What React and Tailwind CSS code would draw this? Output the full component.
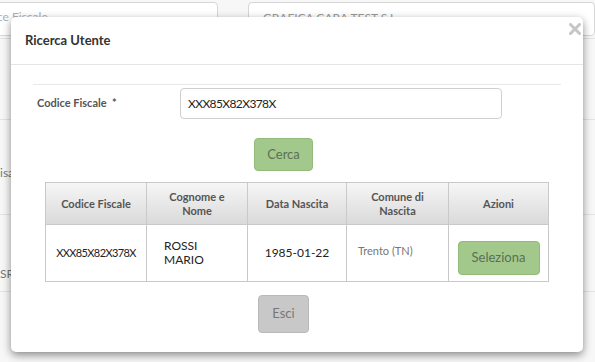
import { useState } from "react";

const rows = [
  { cf: "XXX85X82X378X", nome: "ROSSI\nMARIO", data: "1985-01-22", comune: "Trento (TN)" },
];

export default function App() {
  const [codice, setCodice] = useState("XXX85X82X378X");

  return (
    <div
      className="relative w-[595px] h-[362px] overflow-hidden bg-[#f7f7f7] text-[#333]"
      style={{ fontFamily: "Lato, 'Open Sans', sans-serif" }}
    >
      {/* page behind the modal */}
      <div className="flex gap-[30px] mt-[2px]">
        <div className="w-[228px] -ml-[10px] h-[34px] border border-[#d6d6d6] rounded-[4px] bg-white pt-[7px] pl-[6px] text-[12px] leading-[14px] text-[#a9b0c0]">
          ce Fiscale
        </div>
        <div className="flex-1 h-[34px] border border-[#d6d6d6] rounded-[4px] bg-white pt-[8px] pl-[14px] text-[12px] leading-[14px] text-[#999]">
          GRAFICA CARA TEST S.I.
        </div>
      </div>
      <div className="border-b border-[#e3e3e3] mt-[2px] h-0" />
      <div className="mt-[80px] border-b border-[#e3e3e3]" />
      <div className="mt-[44px] text-[12px] text-[#777]">isa</div>
      <div className="mt-[32px] border-b border-[#e3e3e3]" />
      <div className="mt-[50px] text-[12px] text-[#777]">SR</div>
      <div className="mt-[8px] border-b border-[#e3e3e3]" />

      {/* modal */}
      <div className="absolute left-[11px] top-[17px] w-[572px] h-[335px] bg-white rounded-[5px] shadow-[0_3px_9px_rgba(0,0,0,0.45)] flex flex-col">
        <div className="h-[48px] border-b border-[#e5e5e5] flex items-center px-[14px] relative">
          <span className="text-[13px] font-bold text-[#333]">Ricerca Utente</span>
          <svg className="absolute left-[558px] top-[6px]" width="12" height="12" viewBox="0 0 12 12">
            <path d="M1.5 1.5 L10.5 10.5 M10.5 1.5 L1.5 10.5" stroke="#c6c6c6" strokeWidth="3" strokeLinecap="round" />
          </svg>
        </div>

        <div className="px-[22px] pt-[19px] flex flex-col">
          <div className="border-t border-[#e8e8e8]" />
          <div className="flex items-center mt-[3px] h-[31px]">
            <label className="w-[147px] pl-[4px] text-[11px] font-bold text-[#555]">
              Codice Fiscale&nbsp;&nbsp;*
            </label>
            <input
              value={codice}
              onChange={(e) => setCodice(e.target.value)}
              className="w-[322px] h-[31px] border border-[#cfcfcf] rounded-[4px] px-[7px] text-[12px] text-[#222] tracking-[-0.6px] outline-none"
            />
          </div>

          <div className="flex mt-[19px]">
            <button className="ml-[221px] w-[59px] h-[33px] rounded-[4px] bg-[#a2c98b] border border-[#92bb7a] text-[13px] text-[#5d6f55]">
              Cerca
            </button>
          </div>

          <table className="mt-[11px] ml-[12px] w-[504px] border-collapse border border-[#c9c9c9] text-[11px]">
            <thead>
              <tr className="bg-gradient-to-b from-[#f6f6f6] to-[#d9d9d9] h-[42px]">
                <th className="w-[101px] border border-[#c9c9c9] font-bold text-[#555] leading-[14px]">Codice Fiscale</th>
                <th className="w-[101px] border border-[#c9c9c9] font-bold text-[#555] leading-[14px]">Cognome e<br />Nome</th>
                <th className="w-[99px] border border-[#c9c9c9] font-bold text-[#555] leading-[14px]">Data Nascita</th>
                <th className="w-[102px] border border-[#c9c9c9] font-bold text-[#555] leading-[14px]">Comune di<br />Nascita</th>
                <th className="border border-[#c9c9c9] font-bold text-[#555] leading-[14px]">Azioni</th>
              </tr>
            </thead>
            <tbody>
              {rows.map((r) => (
                <tr key={r.cf} className="h-[57px]">
                  <td className="border border-[#c9c9c9] text-center text-[11px] tracking-[-0.6px] text-[#222]">{r.cf}</td>
                  <td className="border border-[#c9c9c9] pl-[17px] text-[12px] leading-[14px] text-[#222] whitespace-pre-line">{r.nome}</td>
                  <td className="border border-[#c9c9c9] text-center text-[12px] text-[#222]">{r.data}</td>
                  <td className="border border-[#c9c9c9] pl-[11px] text-[11px] text-[#777] align-top pt-[18px]">{r.comune}</td>
                  <td className="border border-[#c9c9c9] text-center align-top pt-[16px]">
                    <button className="w-[82px] h-[34px] rounded-[4px] bg-[#a2c98b] border border-[#92bb7a] text-[13px] text-[#5d6f55]">
                      Seleziona
                    </button>
                  </td>
                </tr>
              ))}
            </tbody>
          </table>

          <div className="flex mt-[13px]">
            <button className="ml-[225px] w-[51px] h-[38px] rounded-[4px] bg-[#c8c8c8] border border-[#b9b9b9] text-[13px] text-[#777]">
              Esci
            </button>
          </div>
        </div>
      </div>
    </div>
  );
}
